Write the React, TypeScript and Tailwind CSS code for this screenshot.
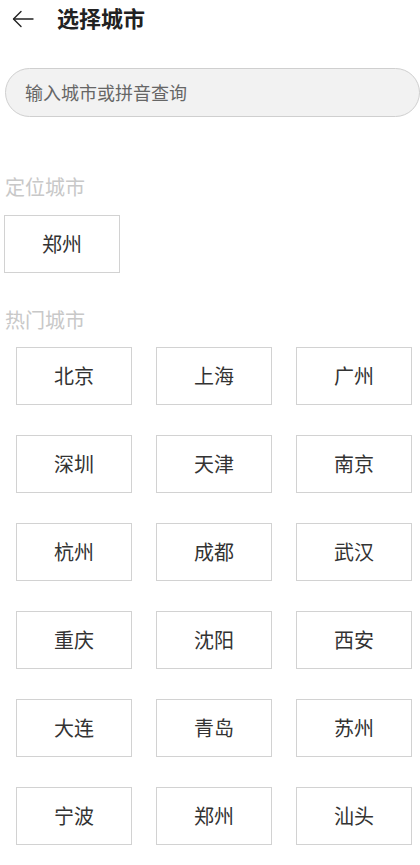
import { useState } from "react";

const hotCities = [
  "北京", "上海", "广州",
  "深圳", "天津", "南京",
  "杭州", "成都", "武汉",
  "重庆", "沈阳", "西安",
  "大连", "青岛", "苏州",
  "宁波", "郑州", "汕头",
];

const font = { fontFamily: '"Noto Sans CJK SC", "Noto Sans", sans-serif' };

function CityBox({ name }: { name: string }) {
  return (
    <div className="w-[116px] h-[58px] border border-[#d2d2d2] flex items-center justify-center text-[20px] text-[#333333] bg-white">
      {name}
    </div>
  );
}

export default function App() {
  const [keyword, setKeyword] = useState("");

  return (
    <div className="w-[420px] min-h-[865px] bg-white overflow-hidden" style={font}>
      <header className="h-[34px] flex items-center pl-[12px]">
        <svg width="22" height="18" viewBox="0 0 22 18" fill="none" stroke="#222" strokeWidth="1.4" strokeLinecap="round" strokeLinejoin="round" className="mt-[3px]">
          <path d="M21 9H2" />
          <path d="M9 1.5L1.5 9L9 16.5" />
        </svg>
        <h1 className="ml-[23px] text-[22px] font-bold text-[#222222] leading-none">选择城市</h1>
      </header>

      <div className="mt-[34px] ml-[5px] w-[415px] h-[49px] rounded-full border border-[#cfcfcf] bg-[#f2f2f2] flex items-center px-[19px]">
        <input
          value={keyword}
          onChange={(e) => setKeyword(e.target.value)}
          placeholder="输入城市或拼音查询"
          className="w-full bg-transparent outline-none text-[18px] text-[#333] placeholder:text-[#666666]"
          style={font}
        />
      </div>

      <p className="mt-[60px] ml-[5px] text-[20px] leading-[20px] text-[#c8c8c8]">定位城市</p>
      <div className="mt-[18px] ml-[4px]">
        <CityBox name="郑州" />
      </div>

      <p className="mt-[37px] ml-[5px] text-[20px] leading-[20px] text-[#c8c8c8]">热门城市</p>
      <div className="mt-[17px] pl-[16px] grid grid-cols-[116px_116px_116px] gap-x-[24px] gap-y-[30px]">
        {hotCities.map((c, i) => (
          <CityBox key={i} name={c} />
        ))}
      </div>
    </div>
  );
}
